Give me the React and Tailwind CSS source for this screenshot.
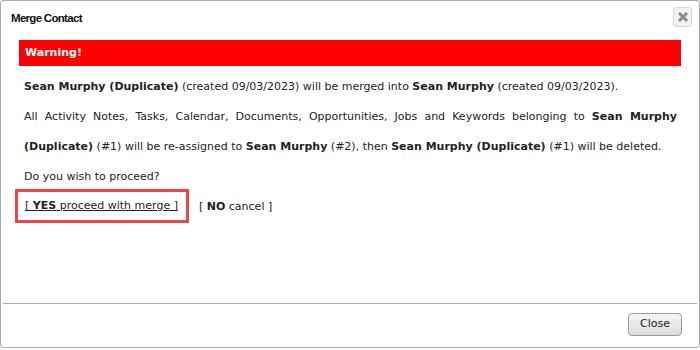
export default function App() {
  return (
    <div className="w-[700px] h-[350px] bg-white">
      <div className="w-[700px] h-[348px] border border-[#aaaaaa] rounded-[3px] flex flex-col bg-white font-['DejaVu_Sans',sans-serif] text-[11px] text-[#222222]">
        <div className="h-[39px] flex items-start justify-between pl-[10px] pr-[7px]">
          <div className="pt-[10px] leading-[14px] font-['Liberation_Sans',sans-serif] font-bold text-[11.5px] tracking-[-0.7px] text-[#111111]">
            Merge Contact
          </div>
          <div className="mt-[6px] w-[19px] h-[20px] rounded-[3px] border border-[#d4d4d4] bg-[#f2f2f2] flex items-center justify-center">
            <svg width="10" height="10" viewBox="0 0 10 10">
              <path d="M2 2 L8 8 M8 2 L2 8" stroke="#8a8a8a" strokeWidth="3" strokeLinecap="square" />
            </svg>
          </div>
        </div>
        <div className="px-[18px]">
          <div className="h-[26px] bg-[#ff0000] px-[6px] flex items-center text-white font-bold text-[11px]">
            Warning!
          </div>
          <div className="pl-[5px] pr-[4px] leading-[30px]">
            <p className="mt-[6px]">
              <b>Sean Murphy (Duplicate)</b> (created 09/03/2023) will be merged into <b>Sean Murphy</b> (created 09/03/2023).
            </p>
            <p className="text-justify">
              All Activity Notes, Tasks, Calendar, Documents, Opportunities, Jobs and Keywords belonging to <b>Sean Murphy (Duplicate)</b> (#1) will be re-assigned to <b>Sean Murphy</b> (#2), then <b>Sean Murphy (Duplicate)</b> (#1) will be deleted.
            </p>
            <p>Do you wish to proceed?</p>
            <div className="h-[30px] flex items-center">
              <div className="-ml-[9px] -mt-[2px] h-[34px] border-[3px] border-[#ee4444] pl-[7px] pr-[8px] flex items-center">
                <a className="underline leading-[16px] text-[#222222]">[ <b>YES</b> proceed with merge ]</a>
              </div>
              <a className="ml-[10px] leading-[16px]">[ <b>NO</b> cancel ]</a>
            </div>
          </div>
        </div>
        <div className="flex-1" />
        <div className="mx-[2px] border-t border-[#aaaaaa]" />
        <div className="flex justify-end pr-[17px] pt-[9px] pb-[11px]">
          <button className="w-[54px] h-[23px] rounded-[4px] border border-[#9a9a9a] bg-gradient-to-b from-[#f4f4f4] to-[#dcdcdc] text-[11px] text-[#222222] font-['DejaVu_Sans',sans-serif]">
            Close
          </button>
        </div>
      </div>
    </div>
  );
}
